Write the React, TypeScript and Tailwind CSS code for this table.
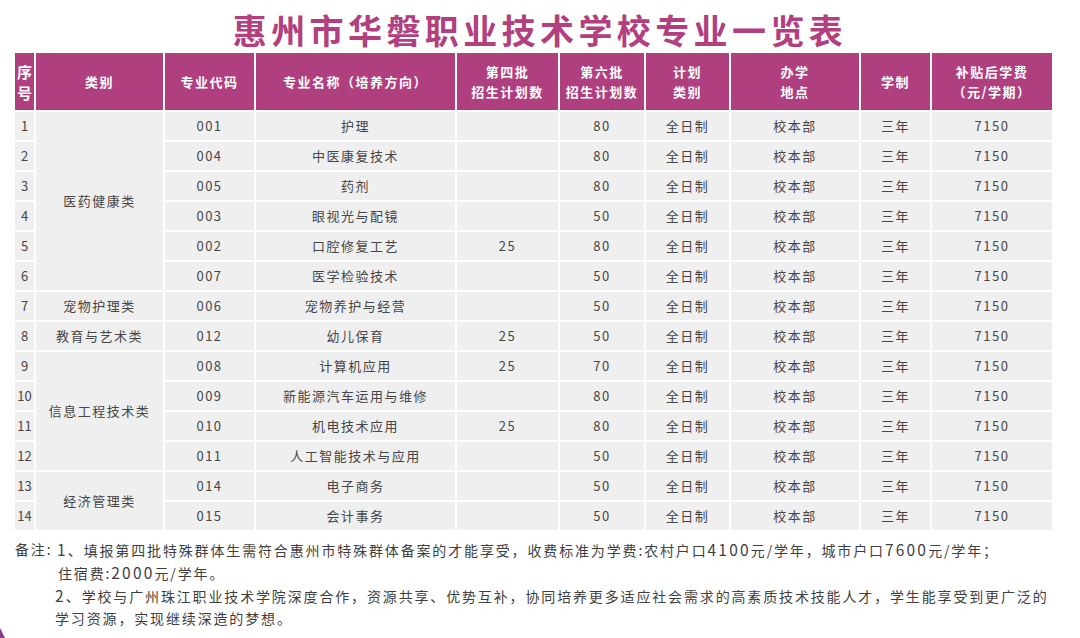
const rows: [string, string, string, string][] = [
  ["001", "护理", "", "80"],
  ["004", "中医康复技术", "", "80"],
  ["005", "药剂", "", "80"],
  ["003", "眼视光与配镜", "", "50"],
  ["002", "口腔修复工艺", "25", "80"],
  ["007", "医学检验技术", "", "50"],
  ["006", "宠物养护与经营", "", "50"],
  ["012", "幼儿保育", "25", "50"],
  ["008", "计算机应用", "25", "70"],
  ["009", "新能源汽车运用与维修", "", "80"],
  ["010", "机电技术应用", "25", "80"],
  ["011", "人工智能技术与应用", "", "50"],
  ["014", "电子商务", "", "50"],
  ["015", "会计事务", "", "50"],
];

// category cell starts at these row indexes
const categories: Record<number, { name: string; span: string }> = {
  0: { name: "医药健康类", span: "row-span-6" },
  6: { name: "宠物护理类", span: "row-span-1" },
  7: { name: "教育与艺术类", span: "row-span-1" },
  8: { name: "信息工程技术类", span: "row-span-4" },
  12: { name: "经济管理类", span: "row-span-2" },
};

const headers = [
  ["序", "号"],
  ["类别"],
  ["专业代码"],
  ["专业名称（培养方向）"],
  ["第四批", "招生计划数"],
  ["第六批", "招生计划数"],
  ["计划", "类别"],
  ["办学", "地点"],
  ["学制"],
  ["补贴后学费", "（元/学期）"],
];

const cell = "bg-[#efefef] flex items-center justify-center text-[13px] tracking-[1.5px] text-[#464646]";

function Num({ children }: { children: string }) {
  return <span className="text-[15.5px] tracking-[2.2px]">{children}</span>;
}

export default function App() {
  return (
    <div
      className="relative w-[1080px] h-[638px] overflow-hidden bg-white"
      style={{ fontFamily: '"Noto Sans CJK SC", "Noto Sans", sans-serif' }}
    >
      <h1 className="pt-[8px] h-[53px] text-center text-[34px] leading-[44px] font-bold tracking-[4.4px] text-[#b2407f]">
        惠州市华磐职业技术学校专业一览表
      </h1>

      <div className="ml-[15px] grid grid-cols-[19px_127px_89px_199px_101px_84px_83px_128px_69px_120px] grid-rows-[57px_repeat(14,28px)] gap-[2px]">
        {headers.map((h, i) => (
          <div
            key={i}
            className="bg-[#b03f80] flex flex-col items-center justify-center text-white font-bold text-[13px] leading-[20px] tracking-[1.5px]"
          >
            {h.map((t) => (
              <span key={t} className={i === 0 ? "text-[15px] leading-[21px] tracking-normal" : ""}>
                {t}
              </span>
            ))}
          </div>
        ))}

        {rows.map((r, i) => (
          <>
            <div key={"n" + i} className={cell + " tracking-normal"}>
              {i + 1}
            </div>
            {categories[i] && (
              <div key={"c" + i} className={cell + " " + categories[i].span}>
                {categories[i].name}
              </div>
            )}
            <div key={"a" + i} className={cell}>{r[0]}</div>
            <div key={"b" + i} className={cell}>{r[1]}</div>
            <div key={"d" + i} className={cell}>{r[2]}</div>
            <div key={"e" + i} className={cell}>{r[3]}</div>
            <div key={"f" + i} className={cell}>全日制</div>
            <div key={"g" + i} className={cell}>校本部</div>
            <div key={"h" + i} className={cell}>三年</div>
            <div key={"k" + i} className={cell}>7150</div>
          </>
        ))}
      </div>

      <div className="mt-[8px] ml-[15px] flex text-[14px] leading-[22px] tracking-[1.85px] text-[#3f3f3f] whitespace-nowrap">
        <span className="w-[42px]">备注:</span>
        <div className="flex flex-col">
          <span>
            <Num>1</Num>、填报第四批特殊群体生需符合惠州市特殊群体备案的才能享受，收费标准为学费:农村户口<Num>4100</Num>元/学年，城市户口<Num>7600</Num>元/学年；
          </span>
          <span className="pl-[1px]">
            住宿费:<Num>2000</Num>元/学年。
          </span>
          <span className="-ml-[2px]">
            <Num>2</Num>、学校与广州珠江职业技术学院深度合作，资源共享、优势互补，协同培养更多适应社会需求的高素质技术技能人才，学生能享受到更广泛的
          </span>
          <span className="-ml-[2px]">学习资源，实现继续深造的梦想。</span>
        </div>
      </div>

      <svg className="absolute left-0 bottom-0" width="8" height="12" viewBox="0 0 8 12">
        <path d="M0 2 L5 12 L0 12 Z" fill="#8a3b8c" />
      </svg>
    </div>
  );
}
